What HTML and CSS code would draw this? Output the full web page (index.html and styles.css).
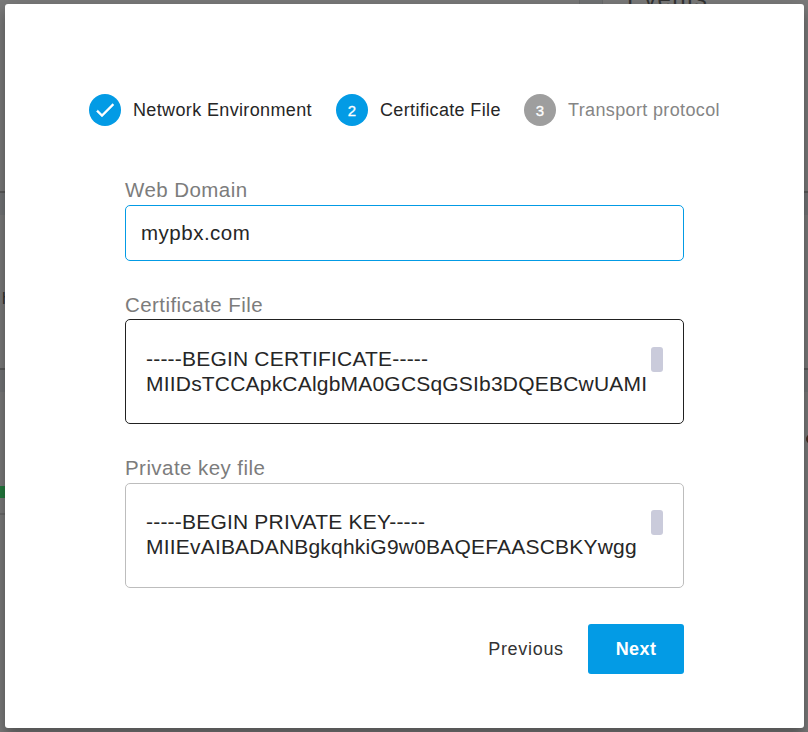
FILE: index.html
```html
<!DOCTYPE html>
<html lang="en">
<head>
<meta charset="utf-8">
<title>Certificate setup</title>
<link rel="stylesheet" href="styles.css">
</head>
<body>
<div class="backdrop">
  <div class="panel top-panel"><div class="summary"></div><div class="gutter"></div><div class="events">Events</div></div>
  <div class="panel middle-panel"><span class="clip-text">h</span></div>
  <div class="panel bottom-panel"><i class="status"></i><i class="mark"></i><i class="dot"></i></div>
</div>
<main class="dialog">
  <ol class="stepper">
    <li class="step"><span class="badge"><svg viewBox="0 0 24 24" width="24" height="24"><path d="M9 16.17 4.83 12l-1.42 1.41L9 19 21 7l-1.41-1.41z" fill="#fff" stroke="#fff" stroke-width=".4"/></svg></span><span class="name n1">Network Environment</span></li>
    <li class="step"><span class="badge">2</span><span class="name n2">Certificate File</span></li>
    <li class="step pending"><span class="badge">3</span><span class="name n3">Transport protocol</span></li>
  </ol>
  <form class="form">
    <div class="field domain"><label>Web Domain</label><div class="box active"><span>mypbx.com</span></div></div>
    <div class="field cert"><label>Certificate File</label><div class="box area hovered"><div class="lines"><span>-----BEGIN CERTIFICATE-----</span><span>MIIDsTCCApkCAlgbMA0GCSqGSIb3DQEBCwUAMI</span></div><i class="thumb"></i></div></div>
    <div class="field key"><label>Private key file</label><div class="box area"><div class="lines"><span>-----BEGIN PRIVATE KEY-----</span><span>MIIEvAIBADANBgkqhkiG9w0BAQEFAASCBKYwgg</span></div><i class="thumb"></i></div></div>
    <div class="actions"><button type="button" class="previous">Previous</button><button type="button" class="next">Next</button></div>
  </form>
</main>
</body>
</html>
```
FILE: styles.css
```css
* { box-sizing: border-box; }
body { margin: 0; width: 808px; height: 732px; overflow: hidden; background: #737474; font-family: "Liberation Sans", Arial, sans-serif; color: #262626; }
.backdrop { position: absolute; inset: 0; overflow: hidden; display: flex; flex-direction: column; gap: 22px; background: #727476; }
.panel { background: #7a7a7a; border-bottom: 2px solid #5a5a5a; flex: none; }
.top-panel { height: 193px; display: flex; }
.summary { width: 579px; }
.gutter { width: 24px; background: #727475; border: solid #6a6b6c; border-width: 0 1px; }
.events { padding-left: 24px; margin-top: -15px; font-size: 24px; line-height: 27px; letter-spacing: 1.3px; color: #343434; }
.middle-panel { height: 155px; }
.clip-text { display: block; margin: 75px 0 0 2px; font-size: 16px; line-height: 18px; color: #303030; }
.bottom-panel { height: 362px; padding-top: 94px; position: relative; }
.status { display: block; width: 6px; height: 12px; background: #237a3d; }
.mark { display: block; width: 5px; height: 2px; margin-top: 15px; background: #6a6a6a; }
.dot { position: absolute; left: 806px; top: 42px; width: 10px; height: 10px; border-radius: 50%; background: #4a3025; }
.dialog { position: absolute; left: 5px; top: 4px; width: 799px; height: 724px; padding: 90px 84px 0; border-radius: 3px; background: #fff; box-shadow: 0 8px 12px rgba(0,0,0,.25), 0 3px 20px rgba(0,0,0,.12); }
.stepper { display: flex; gap: 24px; margin: 0; padding: 0; list-style: none; }
.step { display: flex; align-items: center; gap: 12px; height: 32px; }
.badge { display: grid; place-items: center; width: 32px; height: 32px; border-radius: 50%; background: #039be5; color: #fff; font-size: 15px; -webkit-text-stroke: .3px #fff; }
.badge svg { display: block; }
.name { font-size: 18px; line-height: 24px; white-space: nowrap; letter-spacing: .36px; }
.n1 { width: 179px; }
.n2 { width: 120px; }
.pending .badge { background: #9e9e9e; }
.pending .name { color: #858585; }
.form { width: 559px; margin: 52px 0 0 36px; }
.field label { display: block; font-size: 20.5px; line-height: 24px; letter-spacing: .44px; color: #7c7c7c; }
.domain { margin-bottom: 32px; }
.cert { margin-bottom: 33px; }
.key { margin-bottom: 36px; }
.domain label { height: 27px; }
.cert label { height: 26px; }
.key label { height: 26px; line-height: 22px; }
.box { display: flex; height: 56px; padding: 0 15px; align-items: center; border: 1px solid #bdbdbd; border-radius: 5px; font-size: 20.5px; letter-spacing: .5px; }
.active { border-color: #039be5; }
.area { height: 105px; padding: 27px 20px; align-items: flex-start; justify-content: space-between; font-size: 21px; letter-spacing: .2px; }
.hovered { border-color: #212121; }
.lines { display: flex; flex-direction: column; line-height: 25px; white-space: nowrap; margin-top: -1px; }
.key .lines { margin-top: -2px; }
.key .thumb { margin-top: -1px; }
.thumb { flex: none; width: 12px; height: 25px; border-radius: 3px; background: #cacbdb; }
.actions { display: flex; justify-content: flex-end; }
button { height: 50px; border: 0; border-radius: 3px; padding: 0; background: none; color: #333; font: 18px "Liberation Sans", Arial, sans-serif; letter-spacing: .7px; }
.previous { margin-right: 24px; width: 76px; }
.next { width: 96px; background: #039be5; color: #fff; font-weight: bold; letter-spacing: .4px; }
```
